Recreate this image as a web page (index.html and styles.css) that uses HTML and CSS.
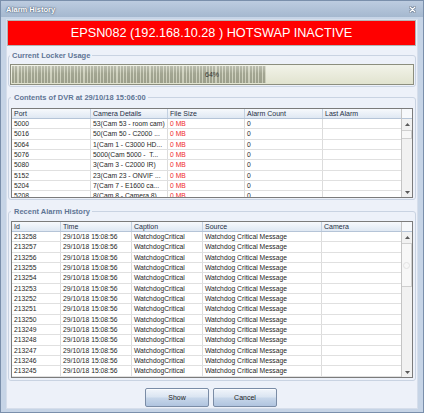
FILE: index.html
```html
<!DOCTYPE html>
<html>
<head>
<meta charset="utf-8">
<title>Alarm History</title>
<link rel="stylesheet" href="styles.css">
</head>
<body>
<div class="window">
  <div class="titlebar">
    <span class="title">Alarm History</span>
    <svg class="close" width="7" height="7" viewBox="0 0 7 7"><path d="M1 1L6 6M6 1L1 6" stroke="#5d6f88" stroke-width="2.6" stroke-linecap="round"/><path d="M1 1L6 6M6 1L1 6" stroke="#fff" stroke-width="1.4" stroke-linecap="round"/></svg>
  </div>
  <div class="client">
    <div class="banner">EPSN082 (192.168.10.28 ) HOTSWAP INACTIVE</div>

    <fieldset class="group g1">
      <legend>Current Locker Usage</legend>
      <div class="progress">
        <div class="progress-fill" style="width:63.5%"></div>
        <span class="progress-label">64%</span>
      </div>
    </fieldset>

    <fieldset class="group g2">
      <legend>Contents of DVR at 29/10/18 15:06:00</legend>
      <div class="grid dvr">
        <div class="grid-main">
          <div class="thead"><div class="th">Port</div><div class="th">Camera Details</div><div class="th">File Size</div><div class="th">Alarm Count</div><div class="th">Last Alarm</div></div>
          <div class="row"><div class="td">5000</div><div class="td">53(Cam 53 - room cam)</div><div class="td red">0 MB</div><div class="td">0</div><div class="td"></div></div>
          <div class="row"><div class="td">5016</div><div class="td">50(Cam 50 - C2000 ...</div><div class="td red">0 MB</div><div class="td">0</div><div class="td"></div></div>
          <div class="row"><div class="td">5064</div><div class="td">1(Cam 1 - C3000 HD...</div><div class="td red">0 MB</div><div class="td">0</div><div class="td"></div></div>
          <div class="row"><div class="td">5076</div><div class="td">5000(Cam 5000 -&nbsp; T...</div><div class="td red">0 MB</div><div class="td">0</div><div class="td"></div></div>
          <div class="row"><div class="td">5080</div><div class="td">3(Cam 3 - C2000 IR)</div><div class="td red">0 MB</div><div class="td">0</div><div class="td"></div></div>
          <div class="row"><div class="td">5152</div><div class="td">23(Cam 23 - ONVIF ...</div><div class="td red">0 MB</div><div class="td">0</div><div class="td"></div></div>
          <div class="row"><div class="td">5204</div><div class="td">7(Cam 7 - E1600 ca...</div><div class="td red">0 MB</div><div class="td">0</div><div class="td"></div></div>
          <div class="row"><div class="td">5208</div><div class="td">8(Cam 8 - Camera 8)</div><div class="td red">0 MB</div><div class="td">0</div><div class="td"></div></div>
        </div>
        <div class="vscroll">
          <div class="vs-head"></div>
          <div class="vs-btn"><svg width="5" height="3" viewBox="0 0 5 3"><path d="M0 3H5L2.5 0Z" fill="#5a5a5a"/></svg></div>
          <div class="vs-thumb small"></div>
          <div class="vs-space"></div>
          <div class="vs-btn"><svg width="5" height="3" viewBox="0 0 5 3"><path d="M0 0H5L2.5 3Z" fill="#5a5a5a"/></svg></div>
        </div>
      </div>
    </fieldset>

    <fieldset class="group g3">
      <legend>Recent Alarm History</legend>
      <div class="grid alarms">
        <div class="grid-main">
          <div class="thead"><div class="th">Id</div><div class="th">Time</div><div class="th">Caption</div><div class="th">Source</div><div class="th">Camera</div></div>
          <div class="row"><div class="td">213258</div><div class="td">29/10/18 15:08:56</div><div class="td">WatchdogCritical</div><div class="td">Watchdog Critical Message</div><div class="td"></div></div>
          <div class="row"><div class="td">213257</div><div class="td">29/10/18 15:08:56</div><div class="td">WatchdogCritical</div><div class="td">Watchdog Critical Message</div><div class="td"></div></div>
          <div class="row"><div class="td">213256</div><div class="td">29/10/18 15:08:56</div><div class="td">WatchdogCritical</div><div class="td">Watchdog Critical Message</div><div class="td"></div></div>
          <div class="row"><div class="td">213255</div><div class="td">29/10/18 15:08:56</div><div class="td">WatchdogCritical</div><div class="td">Watchdog Critical Message</div><div class="td"></div></div>
          <div class="row"><div class="td">213254</div><div class="td">29/10/18 15:08:56</div><div class="td">WatchdogCritical</div><div class="td">Watchdog Critical Message</div><div class="td"></div></div>
          <div class="row"><div class="td">213253</div><div class="td">29/10/18 15:08:56</div><div class="td">WatchdogCritical</div><div class="td">Watchdog Critical Message</div><div class="td"></div></div>
          <div class="row"><div class="td">213252</div><div class="td">29/10/18 15:08:56</div><div class="td">WatchdogCritical</div><div class="td">Watchdog Critical Message</div><div class="td"></div></div>
          <div class="row"><div class="td">213251</div><div class="td">29/10/18 15:08:56</div><div class="td">WatchdogCritical</div><div class="td">Watchdog Critical Message</div><div class="td"></div></div>
          <div class="row"><div class="td">213250</div><div class="td">29/10/18 15:08:56</div><div class="td">WatchdogCritical</div><div class="td">Watchdog Critical Message</div><div class="td"></div></div>
          <div class="row"><div class="td">213249</div><div class="td">29/10/18 15:08:56</div><div class="td">WatchdogCritical</div><div class="td">Watchdog Critical Message</div><div class="td"></div></div>
          <div class="row"><div class="td">213248</div><div class="td">29/10/18 15:08:56</div><div class="td">WatchdogCritical</div><div class="td">Watchdog Critical Message</div><div class="td"></div></div>
          <div class="row"><div class="td">213247</div><div class="td">29/10/18 15:08:56</div><div class="td">WatchdogCritical</div><div class="td">Watchdog Critical Message</div><div class="td"></div></div>
          <div class="row"><div class="td">213246</div><div class="td">29/10/18 15:08:56</div><div class="td">WatchdogCritical</div><div class="td">Watchdog Critical Message</div><div class="td"></div></div>
          <div class="row"><div class="td">213245</div><div class="td">29/10/18 15:08:56</div><div class="td">WatchdogCritical</div><div class="td">Watchdog Critical Message</div><div class="td"></div></div>
        </div>
        <div class="vscroll">
          <div class="vs-head"></div>
          <div class="vs-btn"><svg width="5" height="3" viewBox="0 0 5 3"><path d="M0 3H5L2.5 0Z" fill="#5a5a5a"/></svg></div>
          <div class="vs-thumb big"></div>
          <div class="vs-space"></div>
          <div class="vs-btn"><svg width="5" height="3" viewBox="0 0 5 3"><path d="M0 0H5L2.5 3Z" fill="#5a5a5a"/></svg></div>
        </div>
      </div>
    </fieldset>

    <div class="actions">
      <button class="btn">Show</button>
      <button class="btn">Cancel</button>
    </div>
  </div>
</div>
</body>
</html>
```

FILE: styles.css
```css
* { box-sizing: border-box; }
html, body { margin: 0; padding: 0; }
body {
  width: 424px;
  height: 413px;
  overflow: hidden;
  background: #c5d3e5;
  font-family: "Liberation Sans", Arial, sans-serif;
}
.window {
  width: 424px;
  height: 413px;
  border: 1px solid #7a8fab;
  background: #c6d4e6;
  display: flex;
  flex-direction: column;
}
.titlebar {
  flex: none;
  height: 16px;
  display: flex;
  align-items: center;
  justify-content: space-between;
  padding: 0 7px 0 5px;
  background: linear-gradient(#bdcce0, #a5b8cf);
}
.title {
  color: #fff;
  font-weight: bold;
  font-size: 7.5px;
  line-height: 9px;
  text-shadow: 0 0 2px #46566e, 0 0 1px #46566e;
}
.close { display: block; }
.client {
  flex: 1;
  margin: 2px 5px 3px 5px;
  border: 1px solid #d6deeb;
  background: #edf1f9;
  display: flex;
  flex-direction: column;
}
.banner {
  flex: none;
  height: 26px;
  margin-right: 1px;
  background: #ff0000;
  border: 1px solid #b3b3b3;
  color: #fff;
  font-size: 12.7px;
  display: flex;
  align-items: center;
  justify-content: center;
}
.group {
  margin: 0 1px;
  min-width: 0;
  border: 1px solid #c9d3e2;
  border-radius: 3px;
}
.group legend {
  font-weight: bold;
  font-size: 7.5px;
  line-height: 9px;
  color: #5f7595;
  padding: 0 2px;
}
.g1 { margin-top: 5px; padding: 4px 1px 1px 1px; }
.g2 { margin-top: 6px; padding: 6px 2px 1px 2px; }
.g3 { margin-top: 7px; padding: 5px 2px 2px 2px; }
.g2 legend, .g3 legend { padding-left: 3px; }

.progress {
  position: relative;
  height: 21px;
  border: 1px solid #8c8e7e;
  background: linear-gradient(#f2f3e9, #e1e3cf);
  padding: 1px;
  display: flex;
}
.progress-fill {
  height: 100%;
  background:
    linear-gradient(rgba(255,255,255,0.28), rgba(255,255,255,0) 45%, rgba(0,0,0,0.04)),
    repeating-linear-gradient(90deg, #a2a591 0, #a2a591 2.2px, #d0d2bf 2.2px, #d0d2bf 3.3px);
}
.progress-label {
  position: absolute;
  inset: 0;
  display: flex;
  align-items: center;
  justify-content: center;
  font-size: 7px;
  color: #333;
}

.grid {
  display: flex;
  border: 1px solid #7b7b7b;
  background: #fff;
  overflow: hidden;
}
.dvr { height: 90px; }
.alarms { height: 157px; }
.grid-main {
  flex: 1;
  min-width: 0;
  overflow: hidden;
}
.thead {
  display: grid;
  height: 10px;
  background: linear-gradient(#f7f9fc, #dfe8f3);
  border-bottom: 1px solid #b5c4d7;
}
.row {
  display: grid;
  height: 10.35px;
  border-bottom: 1px solid #e0e0e0;
}
.dvr .thead, .dvr .row { grid-template-columns: 79px 77px 77px 78px 78px; }
.alarms .thead, .alarms .row { grid-template-columns: 49px 71px 71px 119px 79px; }
.th, .td {
  white-space: nowrap;
  overflow: hidden;
  padding-left: 2px;
}
.th {
  font-size: 7px;
  line-height: 9px;
  color: #1f2f45;
  border-right: 1px solid #c4d1e1;
}
.td {
  font-size: 6.75px;
  line-height: 9.35px;
  color: #262626;
  border-right: 1px solid #dcdcdc;
}
.th:last-child, .td:last-child { border-right: none; }
.red { color: #f02828; }

.vscroll {
  flex: none;
  width: 11px;
  display: flex;
  flex-direction: column;
  border-left: 1px solid #c4c4c4;
  background: #f1f1f1;
}
.vs-head {
  flex: none;
  height: 10px;
  background: #f6f8fb;
  border-bottom: 1px solid #b5c4d7;
}
.vs-btn {
  flex: none;
  height: 10px;
  display: flex;
  align-items: center;
  justify-content: center;
}
.vs-btn svg { display: block; }
.vs-thumb {
  flex: none;
  margin: 1px 0 0 0;
  border: 1px solid #cfcfcf;
  border-left: none;
  background: #f7f7f7;
  display: flex;
  align-items: center;
  justify-content: center;
}
.vs-thumb.small { height: 9px; }
.vs-thumb.big { height: 44px; }
.vs-thumb.big::after {
  content: "";
  width: 5px;
  height: 5px;
  border: 1px solid #e2e2e2;
  border-radius: 50%;
}
.vs-space { flex: 1; }

.actions {
  flex: none;
  display: flex;
  justify-content: center;
  gap: 4px;
  margin-top: 7px;
  padding-right: 2px;
}
.btn {
  width: 64px;
  height: 19px;
  margin: 0;
  padding: 0;
  border: 1px solid #7a8ca6;
  border-radius: 2px;
  background: linear-gradient(#f1f5fb, #dbe5f2 45%, #c6d6ea 55%, #b0c4df);
  box-shadow: inset 0 1px 0 rgba(255,255,255,0.7);
  font-family: "Liberation Sans", Arial, sans-serif;
  font-size: 7px;
  color: #1b1b1b;
}
```
